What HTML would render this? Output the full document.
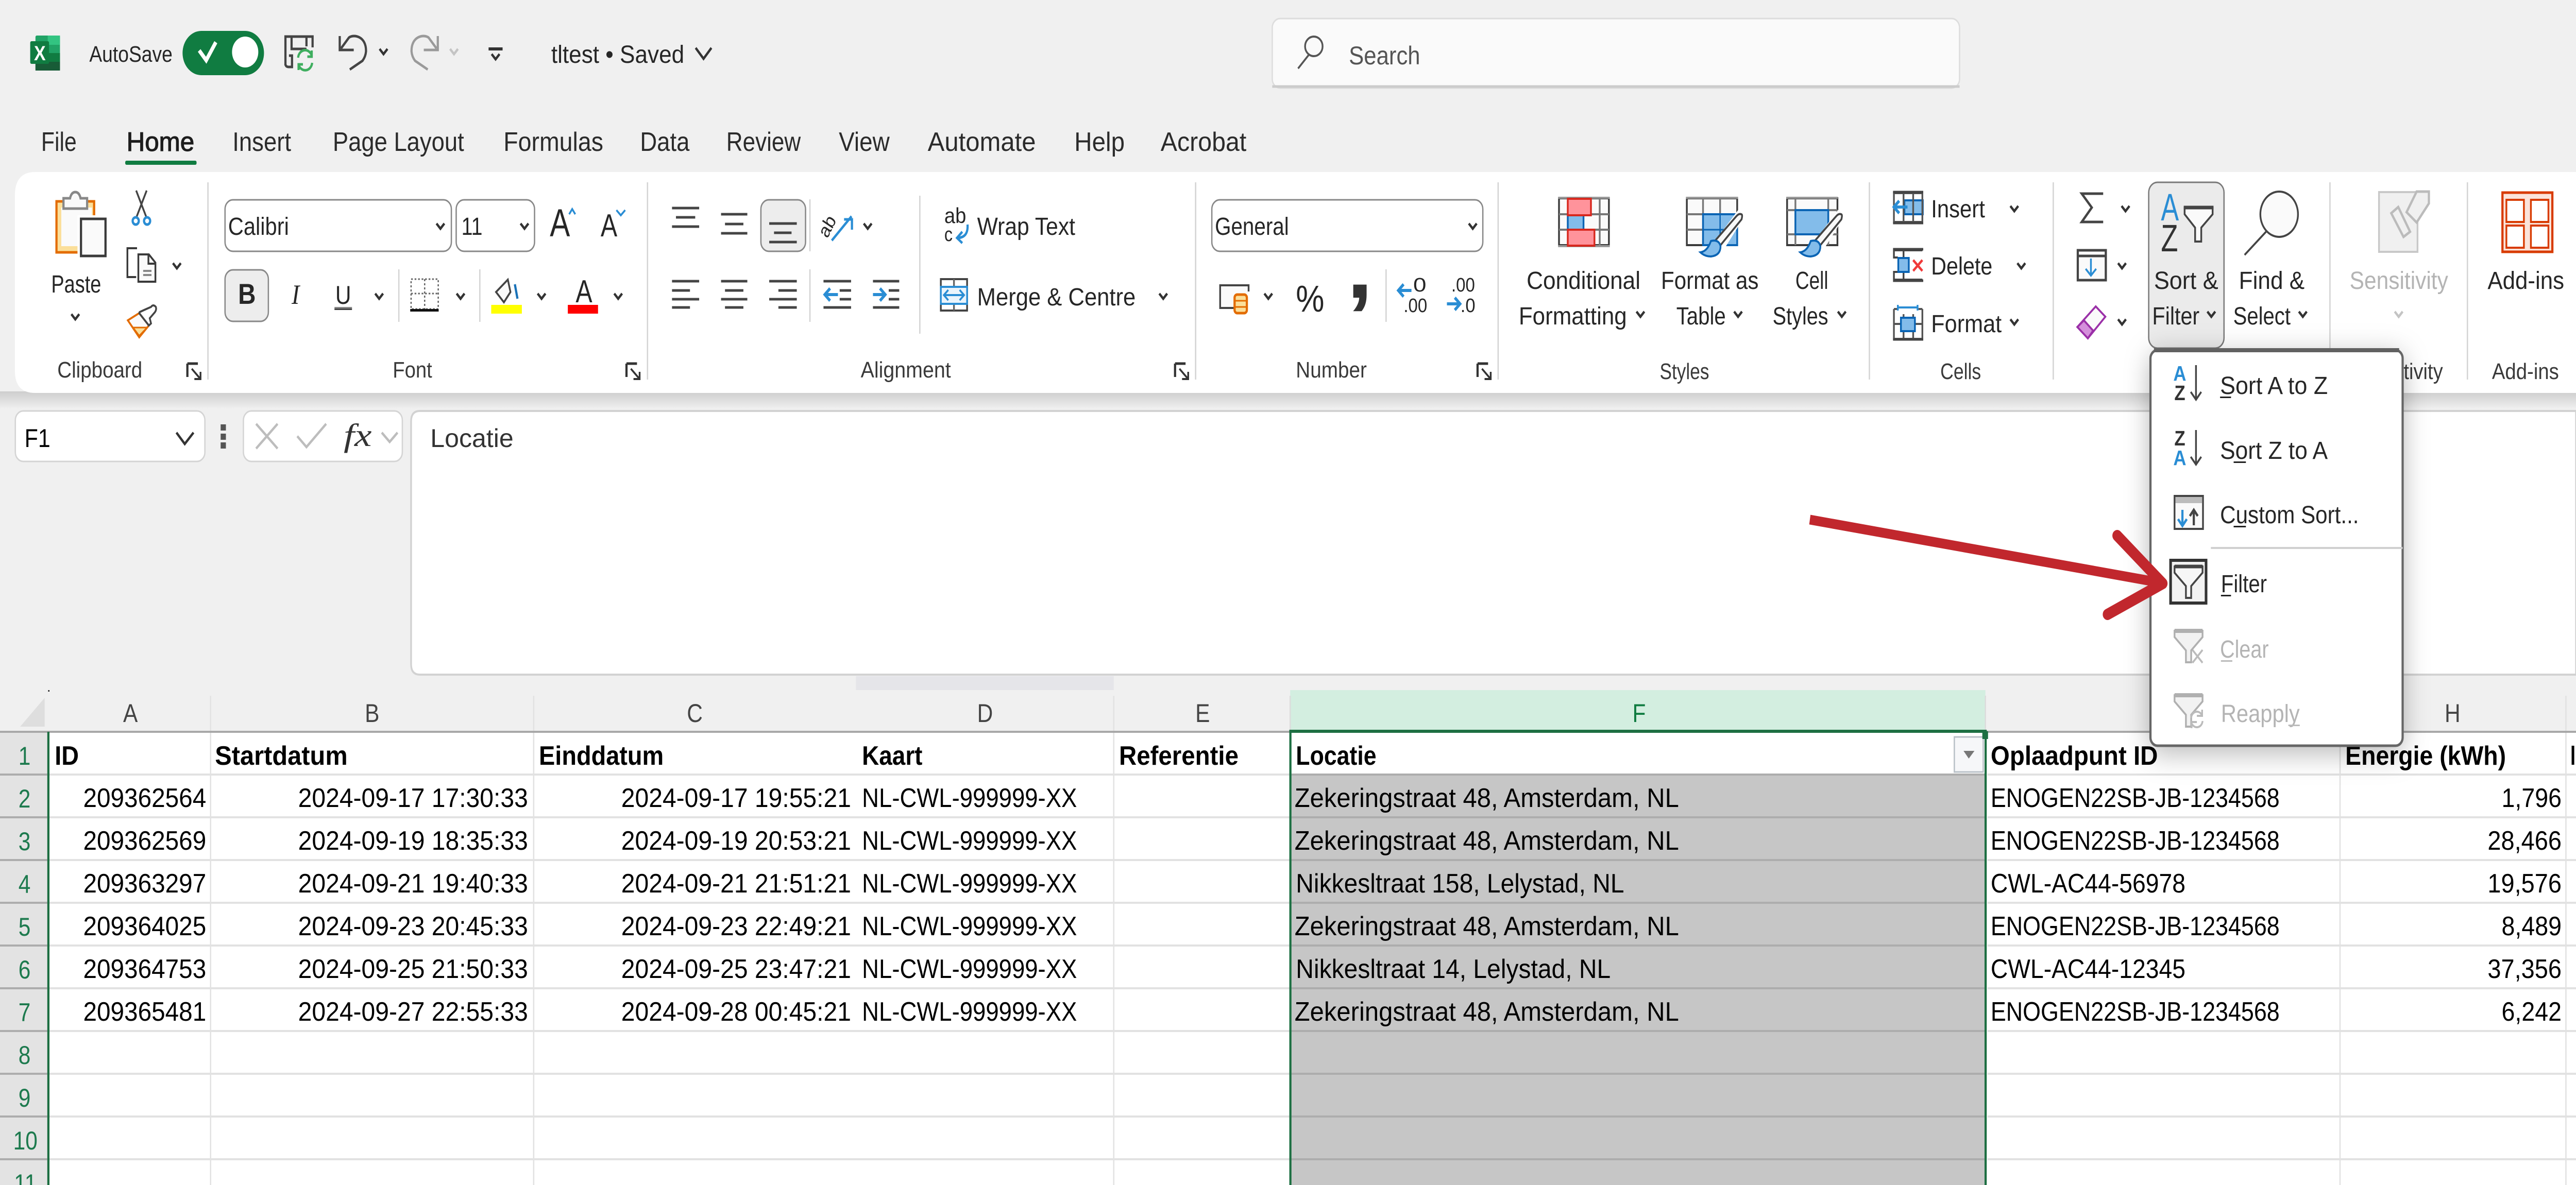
<!DOCTYPE html>
<html lang="en"><head><meta charset="utf-8"><title>tltest - Excel</title>
<style>
html,body{margin:0;padding:0;background:#f0f0f0;width:100%;height:100%;overflow:hidden}
svg{display:block;width:100vw;height:100vh}
text{font-family:"Liberation Sans",sans-serif;fill:#262626;font-size:48px}
.tab{font-size:52px;fill:#2b2b2b}
.lb{font-size:44px;fill:#3a3a3a}
.g{fill:#b4b4b4}
.cell{font-size:52px;fill:#000}
.b{font-size:52px;fill:#000;font-weight:bold}
.hd{font-size:50px;fill:#444;text-anchor:middle}
.rn{font-size:50px;fill:#1d7a4e;text-anchor:middle}
.ln{fill:none;stroke:#444;stroke-width:5}
.lg{fill:none;stroke:#9a9a9a;stroke-width:5}
.bl{fill:none;stroke:#2a8dd4;stroke-width:5}
</style></head><body>
<svg xmlns="http://www.w3.org/2000/svg" viewBox="0 0 5884 2301" preserveAspectRatio="none">
<defs>
<path id="c" d="M-9-5 0 5 9-5" fill="none" stroke="#333" stroke-width="5"/>
<path id="cg" d="M-9-5 0 5 9-5" fill="none" stroke="#c4c4c4" stroke-width="5"/>
<g id="launch"><path d="M2 2H26M2 2V28" fill="none" stroke="#333" stroke-width="5"/><path d="M12 12 32 32M32 18V32H18" fill="none" stroke="#333" stroke-width="4"/></g>
<linearGradient id="sh" x1="0" y1="0" x2="0" y2="1"><stop offset="0" stop-color="#cdcdcd"/><stop offset="1" stop-color="#f0f0f0"/></linearGradient>
<g id="brush"><path d="M3979 410 3985 420 3938 484 3912 474 3970 408Z" fill="#fff"/><path d="M3977 416Q3981 416 3978 426L3930 476 3917 468 3966 420Q3972 414 3977 416Z" fill="#f8f8f8" stroke="#444" stroke-width="4"/><path d="M3908 468Q3926 464 3930 478Q3930 496 3908 498Q3894 498 3884 490Q3900 488 3908 468Z" fill="#83bcea" stroke="#0a64b4" stroke-width="4"/></g>
<g id="fun"><path d="M4967 1100H5031V1112L5005 1138V1161H4993V1138L4967 1112Z" fill="#f6f6f6" stroke="#444" stroke-width="4"/><path d="M4967 1100H5031" stroke="#444" stroke-width="7"/></g>
<g id="fung"><path d="M4967 1225H5031V1237L5005 1263V1286H4993V1263L4967 1237Z" fill="#f2f2f2" stroke="#b0b0b0" stroke-width="4"/><path d="M4967 1225H5031" stroke="#b0b0b0" stroke-width="8"/></g>
</defs>
<rect width="5884" height="2301" fill="#f0f0f0"/>

<!-- title bar -->
<rect x="81" y="69" width="56" height="68" rx="3" fill="#21a366"/>
<rect x="109" y="69" width="28" height="18" fill="#33c481"/>
<rect x="109" y="103" width="28" height="17" fill="#107c41"/>
<rect x="81" y="87" width="28" height="33" fill="#107c41"/>
<rect x="81" y="120" width="56" height="17" fill="#185c37"/>
<rect x="69" y="80" width="43" height="44" rx="3" fill="#107c41"/>
<text x="91" y="117" text-anchor="middle" style="font-size:40px;font-weight:bold;fill:#fff">X</text>
<text x="204" y="120" textLength="190" lengthAdjust="spacingAndGlyphs" style="font-size:44px">AutoSave</text>
<rect x="417" y="60" width="186" height="86" rx="43" fill="#107c41"/>
<ellipse cx="560" cy="101" rx="30" ry="30" fill="#fff"/>
<path d="M455 98 471 117 493 82" fill="none" stroke="#fff" stroke-width="8"/>
<path d="M652 127V71H714V92M666 71V95H700M700 71V90M652 124Q652 130 660 130H667V108H660" class="ln"/>
<path d="M681 112A16 16 0 0 1 712 108M713 122A16 16 0 0 1 683 128M712 98V110H702M682 136V125H692" fill="none" stroke="#3fae5f" stroke-width="5"/>
<path d="M776 70V97H808M779 94 797 73C808 66 837 70 836 100Q835 110 828 118L799 135" class="ln"/>
<use href="#c" x="876" y="100"/>
<path d="M1000 70V97H968M997 94 979 73C968 66 939 70 940 100Q941 110 948 118L977 135" class="lg"/>
<use href="#cg" x="1037" y="100"/>
<rect x="1116" y="92" width="32" height="6" fill="#333"/><use href="#c" x="1132" y="110"/>
<text x="1259" y="122" textLength="304" lengthAdjust="spacingAndGlyphs" style="font-size:48px">tltest  •  Saved</text>
<path d="M1589 93 1607 114 1625 93" fill="none" stroke="#333" stroke-width="5"/>
<rect x="2906" y="36" width="1570" height="135" rx="18" fill="#fafafa" stroke="#ddd" stroke-width="3"/>
<path d="M2906 168H4476" stroke="#ccc" stroke-width="5"/>
<ellipse cx="3001" cy="90" rx="20" ry="19" fill="none" stroke="#555" stroke-width="4"/><path d="M2990 106 2965 133" stroke="#555" stroke-width="4"/>
<text x="3081" y="125" textLength="163" lengthAdjust="spacingAndGlyphs" style="font-size:50px;fill:#555">Search</text>

<!-- tabs -->
<text class="tab" x="94" y="293" textLength="81" lengthAdjust="spacingAndGlyphs">File</text>
<text class="tab" x="289" y="293" textLength="155" lengthAdjust="spacingAndGlyphs" style="fill:#1d1d1d;stroke:#1d1d1d;stroke-width:1.2">Home</text>
<rect x="286" y="312" width="163" height="8" rx="3" fill="#107c41"/>
<text class="tab" x="531" y="293" textLength="134" lengthAdjust="spacingAndGlyphs">Insert</text>
<text class="tab" x="760" y="293" textLength="300" lengthAdjust="spacingAndGlyphs">Page Layout</text>
<text class="tab" x="1150" y="293" textLength="228" lengthAdjust="spacingAndGlyphs">Formulas</text>
<text class="tab" x="1462" y="293" textLength="113" lengthAdjust="spacingAndGlyphs">Data</text>
<text class="tab" x="1659" y="293" textLength="170" lengthAdjust="spacingAndGlyphs">Review</text>
<text class="tab" x="1916" y="293" textLength="116" lengthAdjust="spacingAndGlyphs">View</text>
<text class="tab" x="2119" y="293" textLength="247" lengthAdjust="spacingAndGlyphs">Automate</text>
<text class="tab" x="2454" y="293" textLength="115" lengthAdjust="spacingAndGlyphs">Help</text>
<text class="tab" x="2651" y="293" textLength="196" lengthAdjust="spacingAndGlyphs">Acrobat</text>

<!-- ribbon -->
<rect x="0" y="760" width="5884" height="34" fill="url(#sh)"/>
<path d="M5884 334H80Q34 334 34 380V720Q34 763 80 763H5884Z" fill="#fff"/>
<g stroke="#d4d4d4" stroke-width="3">
<path d="M475 354V737M1479 354V737M2731 354V737M3422 354V737M4270 354V737M4690 354V737M5322 354V737M5636 354V737M2101 380V648M1850 387V488M1850 523V625M911 523V625M1096 523V625M3166 523V625"/>
</g>
<!-- clipboard -->
<rect x="129" y="391" width="86" height="99" fill="#fbdf9a" stroke="#e36c00" stroke-width="5"/>
<rect x="140" y="403" width="70" height="75" fill="#fafafa"/>
<path d="M145 405V385H160Q163 373 172 373Q181 373 184 385H199V405Z" fill="#fafafa" stroke="#888" stroke-width="5"/>
<rect x="177" y="418" width="72" height="86" fill="#fff"/>
<rect x="185" y="425" width="56" height="72" fill="#fafafa" stroke="#3a3a3a" stroke-width="5"/>
<text x="117" y="568" textLength="114" lengthAdjust="spacingAndGlyphs">Paste</text>
<use href="#c" x="172" y="615"/>
<path d="M311 370 334 421M335 370 312 421" stroke="#444" stroke-width="4" fill="none"/>
<circle cx="310" cy="429" r="7" class="bl"/><circle cx="336" cy="429" r="7" class="bl"/>
<path d="M313 482H291V538H311" fill="none" stroke="#3a3a3a" stroke-width="4"/>
<path d="M316 494H340L355 510V547H316Z" fill="#fafafa" stroke="#3a3a3a" stroke-width="4"/>
<path d="M339 494V512H355" fill="none" stroke="#3a3a3a" stroke-width="4"/>
<path d="M327 526H346M327 534H346" stroke="#888" stroke-width="4"/>
<use href="#c" x="404" y="516"/>
<path d="M292 622 318 608 340 632 318 655Z" fill="#fafafa" stroke="#e36c00" stroke-width="4"/>
<path d="M304 636 336 636 318 652Z" fill="#fbdf9a" stroke="#e36c00" stroke-width="3"/>
<path d="M319 606 329 602 345 596Q350 590 356 596Q358 601 354 606L342 618 345 628 340 632 318 608Z" fill="#fff" stroke="#444" stroke-width="4"/>
<text class="lb" x="131" y="733" textLength="194" lengthAdjust="spacingAndGlyphs">Clipboard</text>
<use href="#launch" x="426" y="704"/>

<!-- font -->
<rect x="514" y="388" width="517" height="100" rx="18" fill="#fff" stroke="#888" stroke-width="3"/>
<text x="521" y="456" textLength="139" lengthAdjust="spacingAndGlyphs">Calibri</text><use href="#c" x="1006" y="439"/>
<rect x="1042" y="388" width="179" height="100" rx="18" fill="#fff" stroke="#888" stroke-width="3"/>
<text x="1054" y="456" textLength="48" lengthAdjust="spacingAndGlyphs">11</text><use href="#c" x="1198" y="439"/>
<text x="1256" y="459" textLength="46" lengthAdjust="spacingAndGlyphs" style="font-size:76px">A</text>
<path d="M1300 416 1307 406 1314 416" class="bl" style="stroke-width:4"/>
<text x="1372" y="459" textLength="38" lengthAdjust="spacingAndGlyphs" style="font-size:62px">A</text>
<path d="M1408 408 1418 418 1428 408" class="bl" style="stroke-width:4"/>
<rect x="514" y="524" width="99" height="100" rx="18" fill="#ededed" stroke="#888" stroke-width="3"/>
<text x="564" y="590" text-anchor="middle" style="font-size:56px;font-weight:bold">B</text>
<text x="675" y="590" text-anchor="middle" style="font-size:54px;font-style:italic;font-family:'Liberation Serif',serif">I</text>
<text x="784" y="590" text-anchor="middle" style="font-size:50px">U</text>
<rect x="764" y="596" width="40" height="4" fill="#888"/><rect x="764" y="599" width="40" height="3" fill="#444"/>
<use href="#c" x="866" y="575"/>
<path d="M939 542H1001V600H939ZM970 542V600M939 570H1001" fill="none" stroke="#666" stroke-width="3" stroke-dasharray="4 4"/>
<rect x="937" y="600" width="65" height="5" fill="#111"/>
<use href="#c" x="1052" y="575"/>
<path d="M1133 567 1160 543 1166 567 1151 587Z" fill="#fafafa" stroke="#444" stroke-width="4"/>
<path d="M1176 552 1182 580" stroke="#1a72b8" stroke-width="5"/>
<rect x="1122" y="592" width="70" height="17" fill="#ff0"/>
<use href="#c" x="1237" y="575"/>
<text x="1315" y="587" textLength="38" lengthAdjust="spacingAndGlyphs" style="font-size:62px">A</text>
<rect x="1297" y="592" width="69" height="17" fill="#f00"/>
<use href="#c" x="1412" y="575"/>
<text class="lb" x="897" y="733" textLength="90" lengthAdjust="spacingAndGlyphs">Font</text>
<use href="#launch" x="1429" y="704"/>

<!-- alignment -->
<rect x="1738" y="388" width="102" height="100" rx="18" fill="#ededed" stroke="#888" stroke-width="3"/>
<path d="M1535 404H1597M1544 422H1588M1535 440H1597M1647 416H1707M1656 435H1698M1647 453H1707M1757 434H1820M1768 452H1808M1757 470H1820" class="ln"/>
<path d="M1535 546H1597M1535 564H1576M1535 581H1597M1535 597H1576M1647 546H1707M1656 564H1698M1647 581H1707M1656 597H1698M1757 546H1820M1778 564H1820M1757 581H1820M1778 597H1820" class="ln"/>
<path d="M1881 546H1944M1918 564H1944M1918 581H1944M1881 597H1944M1994 546H2054M2030 564H2054M2030 581H2054M1994 597H2054" class="ln"/>
<path d="M1914 572H1884M1896 560 1884 572 1896 584M1994 572H2022M2010 560 2022 572 2010 584" class="bl" style="stroke-width:6"/>
<text transform="translate(1890 464) rotate(-60)" style="font-size:38px">ab</text>
<path d="M1900 467 1945 420M1928 426H1946V446" class="bl"/>
<use href="#c" x="1982" y="439"/>
<text x="2157" y="433" textLength="50" lengthAdjust="spacingAndGlyphs" style="font-size:42px">ab</text>
<text x="2157" y="468" style="font-size:38px">c</text>
<path d="M2210 436Q2212 462 2186 462M2198 450 2186 462 2198 472" class="bl"/>
<text x="2232" y="456" textLength="224" lengthAdjust="spacingAndGlyphs">Wrap Text</text>
<rect x="2149" y="542" width="60" height="61" fill="#fff" stroke="#444" stroke-width="4"/>
<path d="M2149 557H2209M2149 590H2209M2179 542V557M2179 590V603" stroke="#666" stroke-width="4"/>
<rect x="2149" y="557" width="60" height="33" fill="#eaf4fc" stroke="#2a8dd4" stroke-width="4"/>
<path d="M2156 573H2202M2166 563 2156 573 2166 583M2192 563 2202 573 2192 583" class="bl" style="stroke-width:4"/>
<text x="2232" y="593" textLength="362" lengthAdjust="spacingAndGlyphs">Merge &amp; Centre</text>
<use href="#c" x="2657" y="575"/>
<text class="lb" x="1966" y="733" textLength="206" lengthAdjust="spacingAndGlyphs">Alignment</text>
<use href="#launch" x="2682" y="704"/>

<!-- number -->
<rect x="2768" y="388" width="619" height="100" rx="18" fill="#fff" stroke="#888" stroke-width="3"/>
<text x="2775" y="456" textLength="169" lengthAdjust="spacingAndGlyphs">General</text><use href="#c" x="3364" y="439"/>
<path d="M2835 598H2787V554H2852V566" fill="#fafafa" stroke="#444" stroke-width="4"/>
<rect x="2820" y="572" width="28" height="36" rx="6" fill="#fbdf9a" stroke="#e36c00" stroke-width="5"/>
<path d="M2820 584H2848M2820 596H2848" stroke="#e36c00" stroke-width="3"/>
<use href="#c" x="2897" y="575"/>
<text x="2960" y="605" textLength="65" lengthAdjust="spacingAndGlyphs" style="font-size:72px">%</text>
<text x="3076" y="578" textLength="60" lengthAdjust="spacingAndGlyphs" style="font-size:170px;font-weight:bold;fill:#333">,</text>
<text x="3228" y="566" style="font-size:38px" textLength="30" lengthAdjust="spacingAndGlyphs">0</text>
<text x="3206" y="606" style="font-size:38px" textLength="54" lengthAdjust="spacingAndGlyphs">.00</text>
<path d="M3224 564H3194M3206 552 3194 564 3206 576" class="bl" style="stroke-width:6"/>
<text x="3315" y="566" style="font-size:38px" textLength="54" lengthAdjust="spacingAndGlyphs">.00</text>
<text x="3336" y="606" style="font-size:38px" textLength="34" lengthAdjust="spacingAndGlyphs">.0</text>
<path d="M3305 590H3335M3323 578 3335 590 3323 602" class="bl" style="stroke-width:6"/>
<text class="lb" x="2960" y="733" textLength="162" lengthAdjust="spacingAndGlyphs">Number</text>
<use href="#launch" x="3373" y="704"/>

<!-- styles -->
<rect x="3561" y="385" width="114" height="91" fill="#fafafa" stroke="#3a3a3a" stroke-width="4"/>
<path d="M3559 384H3677M3559 478H3677" stroke="#999" stroke-width="4"/>
<path d="M3561 416H3675M3561 446H3675M3654 385V476" stroke="#777" stroke-width="4"/>
<rect x="3581" y="418" width="36" height="28" fill="#83bcea" stroke="#0a64b4" stroke-width="4"/>
<rect x="3581" y="386" width="53" height="32" fill="#ff939b" stroke="#d8281e" stroke-width="4"/>
<rect x="3581" y="446" width="61" height="31" fill="#ff939b" stroke="#d8281e" stroke-width="4"/>
<text x="3487" y="561" textLength="260" lengthAdjust="spacingAndGlyphs">Conditional</text>
<text x="3469" y="630" textLength="247" lengthAdjust="spacingAndGlyphs">Formatting</text>
<use href="#c" x="3747" y="610"/>

<rect x="3853" y="385" width="115" height="91" fill="#fafafa" stroke="#3a3a3a" stroke-width="4"/>
<path d="M3851 384H3970" stroke="#999" stroke-width="4"/>
<path d="M3853 416H3968M3853 446H3968M3890 385V476M3929 385V476" stroke="#777" stroke-width="4"/>
<rect x="3890" y="416" width="78" height="60" fill="#83bcea" stroke="#0a64b4" stroke-width="4"/>
<path d="M3890 446H3968M3929 416V476" stroke="#0a64b4" stroke-width="3"/>
<use href="#brush"/>
<text x="3794" y="561" textLength="223" lengthAdjust="spacingAndGlyphs">Format as</text>
<text x="3829" y="630" textLength="113" lengthAdjust="spacingAndGlyphs">Table</text>
<use href="#c" x="3970" y="610"/>

<rect x="4082" y="385" width="115" height="91" fill="#fafafa" stroke="#3a3a3a" stroke-width="4"/>
<path d="M4080 384H4198" stroke="#999" stroke-width="4"/>
<path d="M4082 408H4197M4082 455H4197M4101 385V476M4176 385V476" stroke="#777" stroke-width="4"/>
<rect x="4101" y="408" width="75" height="47" fill="#83bcea" stroke="#0a64b4" stroke-width="4"/>
<use href="#brush" x="228"/>
<text x="4101" y="561" textLength="75" lengthAdjust="spacingAndGlyphs">Cell</text>
<text x="4049" y="630" textLength="127" lengthAdjust="spacingAndGlyphs">Styles</text>
<use href="#c" x="4207" y="610"/>
<text class="lb" x="3791" y="736" textLength="113" lengthAdjust="spacingAndGlyphs">Styles</text>

<!-- cells -->
<rect x="4350" y="389" width="42" height="27" fill="#83bcea" stroke="#0a64b4" stroke-width="4"/>
<path d="M4326 375H4391V431H4326ZM4348 375V431M4370 375V431" fill="none" stroke="#555" stroke-width="4"/>
<path d="M4324 373H4393M4324 433H4393" stroke="#444" stroke-width="5"/>
<path d="M4357 402H4326M4338 390 4326 402 4338 414" class="bl" style="stroke-width:6"/>
<text x="4411" y="422" textLength="123" lengthAdjust="spacingAndGlyphs">Insert</text><use href="#c" x="4601" y="405"/>
<path d="M4326 486H4391M4326 543H4391M4326 486V500H4335M4326 543V528H4335M4348 486V500M4348 528V543" fill="none" stroke="#444" stroke-width="4"/>
<path d="M4324 484H4393M4324 545H4393" stroke="#444" stroke-width="5"/>
<rect x="4336" y="501" width="24" height="27" fill="#83bcea" stroke="#0a64b4" stroke-width="4"/>
<path d="M4370 505 4391 526M4391 505 4370 526" stroke="#f03a3a" stroke-width="5"/>
<text x="4411" y="533" textLength="140" lengthAdjust="spacingAndGlyphs">Delete</text><use href="#c" x="4617" y="516"/>
<path d="M4326 600V658H4391V600M4326 600H4335M4382 600H4391M4326 629H4391M4348 610V658M4370 610V658" fill="none" stroke="#555" stroke-width="4"/>
<path d="M4324 659H4393" stroke="#444" stroke-width="5"/>
<path d="M4335 597H4380M4335 592V603M4380 592V603" stroke="#2a8dd4" stroke-width="4"/>
<rect x="4342" y="617" width="32" height="26" fill="#83bcea" stroke="#0a64b4" stroke-width="4"/>
<text x="4411" y="645" textLength="161" lengthAdjust="spacingAndGlyphs">Format</text><use href="#c" x="4601" y="625"/>
<text class="lb" x="4432" y="736" textLength="93" lengthAdjust="spacingAndGlyphs">Cells</text>

<!-- editing -->
<path d="M4804 376H4755L4778 403 4755 431H4804" class="ln"/><use href="#c" x="4855" y="405"/>
<rect x="4746" y="486" width="64" height="58" fill="#fafafa" stroke="#444" stroke-width="5"/>
<path d="M4746 497H4810" stroke="#444" stroke-width="5"/>
<path d="M4776 502V534M4764 522 4776 535 4788 522" class="bl" style="stroke-width:4"/><use href="#c" x="4847" y="516"/>
<path d="M4787 595 4809 615 4769 657 4745 635Z" fill="#fafafa" stroke="#9b30a8" stroke-width="4"/>
<path d="M4760 622 4781 642 4769 657 4745 635Z" fill="#d48fdb" stroke="#9b30a8" stroke-width="4"/>
<use href="#c" x="4847" y="625"/>
<rect x="4908" y="354" width="172" height="322" rx="20" fill="#ebebeb" stroke="#7a7a7a" stroke-width="3"/>
<text x="4936" y="428" textLength="41" lengthAdjust="spacingAndGlyphs" style="font-size:74px;fill:#2a8dd4">A</text>
<text x="4936" y="488" textLength="39" lengthAdjust="spacingAndGlyphs" style="font-size:74px;fill:#333">Z</text>
<path d="M4990 404H5054V416L5028 442V469H5014V442L4990 416Z" fill="#fafafa" stroke="#444" stroke-width="4"/>
<path d="M4988 403H5056" stroke="#444" stroke-width="7"/>
<text x="4920" y="561" textLength="147" lengthAdjust="spacingAndGlyphs">Sort &amp;</text>
<text x="4916" y="630" textLength="108" lengthAdjust="spacingAndGlyphs">Filter</text>
<use href="#c" x="5051" y="610"/>
<ellipse cx="5206" cy="416" rx="43" ry="44" fill="#fafafa" stroke="#444" stroke-width="4"/>
<path d="M5176 450 5127 495" stroke="#444" stroke-width="4"/>
<text x="5114" y="561" textLength="150" lengthAdjust="spacingAndGlyphs">Find &amp;</text>
<text x="5101" y="630" textLength="131" lengthAdjust="spacingAndGlyphs">Select</text>
<use href="#c" x="5260" y="610"/>

<!-- sensitivity / add-ins -->
<rect x="5434" y="373" width="88" height="116" fill="#f0f0f0" stroke="#c8c8c8" stroke-width="4"/>
<path d="M5478 402 5505 450 5490 460 5462 414Z" fill="#f0f0f0" stroke="#bbb" stroke-width="5"/>
<path d="M5520 372 5548 372 5548 395 5520 432 5497 412Z" fill="#f0f0f0" stroke="#bbb" stroke-width="5"/>
<text class="g" x="5367" y="561" textLength="225" lengthAdjust="spacingAndGlyphs">Sensitivity</text>
<use href="#cg" x="5479" y="610"/>
<text class="lb" x="5378" y="736" textLength="202" lengthAdjust="spacingAndGlyphs">Sensitivity</text>
<rect x="5716" y="374" width="114" height="115" fill="#fbe3da" stroke="#d83b01" stroke-width="5"/>
<rect x="5725" y="388" width="40" height="43" fill="#fff" stroke="#d83b01" stroke-width="4"/>
<rect x="5781" y="388" width="40" height="43" fill="#fff" stroke="#d83b01" stroke-width="4"/>
<rect x="5725" y="438" width="40" height="43" fill="#fff" stroke="#d83b01" stroke-width="4"/>
<rect x="5781" y="438" width="40" height="43" fill="#fff" stroke="#d83b01" stroke-width="4"/>
<text x="5682" y="561" textLength="175" lengthAdjust="spacingAndGlyphs">Add-ins</text>
<text class="lb" x="5692" y="736" textLength="153" lengthAdjust="spacingAndGlyphs">Add-ins</text>

<!-- formula bar -->
<rect x="35" y="798" width="433" height="98" rx="18" fill="#fff" stroke="#d4d4d4" stroke-width="3"/>
<text x="56" y="868" textLength="59" lengthAdjust="spacingAndGlyphs" style="font-size:50px;fill:#000">F1</text>
<path d="M403 840 422 862 442 840" fill="none" stroke="#333" stroke-width="5"/>
<rect x="504" y="824" width="12" height="12" fill="#555"/><rect x="504" y="842" width="12" height="12" fill="#555"/><rect x="504" y="859" width="12" height="12" fill="#555"/>
<rect x="556" y="798" width="363" height="98" rx="18" fill="#fff" stroke="#d4d4d4" stroke-width="3"/>
<path d="M585 823 634 871M634 823 585 871M679 847 700 868 745 823M872 840 890 858 908 840" fill="none" stroke="#bdbdbd" stroke-width="5"/>
<text x="785" y="866" textLength="64" lengthAdjust="spacingAndGlyphs" style="font-family:'Liberation Serif',serif;font-style:italic;font-size:62px;fill:#333">fx</text>
<path d="M5884 798H959Q939 798 939 818V1290Q939 1310 959 1310H5884Z" fill="#fff" stroke="#d2d2d2" stroke-width="4"/>
<text x="983" y="868" textLength="190" lengthAdjust="spacingAndGlyphs" style="font-size:50px;fill:#333">Locatie</text>

<!-- grid -->
<rect x="1955" y="1313" width="589" height="27" fill="#e5e5e9"/>
<rect x="0" y="1421" width="108" height="880" fill="#e3e3e3"/>
<rect x="110" y="1421" width="5774" height="880" fill="#fff"/>
<rect x="2947" y="1340" width="1588" height="80" fill="#d3eee0"/>
<rect x="2950" y="1504" width="1586" height="797" fill="#c6c6c6"/>
<path d="M46 1411 102 1355V1411Z" fill="#dedede"/>
<rect x="110" y="1340" width="3" height="3" fill="#222"/>
<g stroke="#e2e2e2" stroke-width="3">
<path d="M481 1351V2301M1219 1351V2301M2544 1351V2301M5345 1351V2301M5861 1351V2301"/>
<path d="M2947 1351V1420M4535 1351V1420" stroke="#dcdcdc"/>
</g>
<g stroke="#e2e2e2" stroke-width="4">
<path d="M110 1504H2947M110 1587H2947M110 1670H2947M110 1753H2947M110 1836H2947M110 1919H2947M110 2002H2947M110 2085H2947M110 2168H2947M110 2251H2947"/>
<path d="M4540 1504H5884M4540 1587H5884M4540 1670H5884M4540 1753H5884M4540 1836H5884M4540 1919H5884M4540 2002H5884M4540 2085H5884M4540 2168H5884M4540 2251H5884"/>
</g>
<g stroke="#adadad" stroke-width="4">
<path d="M2950 1504H4535M2950 1587H4535M2950 1670H4535M2950 1753H4535M2950 1836H4535M2950 1919H4535M2950 2002H4535M2950 2085H4535M2950 2168H4535M2950 2251H4535"/>
<path d="M0 1504H108M0 1587H108M0 1670H108M0 1753H108M0 1836H108M0 1919H108M0 2002H108M0 2085H108M0 2168H108M0 2251H108"/>
<path d="M0 1421H2947M4535 1421H5884" stroke="#a8a8a8"/>
</g>
<rect x="108" y="1421" width="5" height="880" fill="#1d6f42"/>
<rect x="2945" y="1418" width="5" height="883" fill="#1d6f42"/>
<rect x="4533" y="1418" width="5" height="883" fill="#1d6f42"/>
<rect x="2945" y="1417" width="1593" height="6" fill="#1d6f42"/>
<rect x="4464" y="1431" width="66" height="68" fill="#f6f7f9" stroke="#b9c0c7" stroke-width="3"/>
<path d="M4485 1458H4510L4497 1473Z" fill="#777"/>
<rect x="4528" y="1420" width="13" height="15" fill="#1d6f42"/>

<text class="hd" x="298" y="1402">A</text><text class="hd" x="850" y="1402">B</text><text class="hd" x="1587" y="1402">C</text><text class="hd" x="2250" y="1402">D</text><text class="hd" x="2747" y="1402">E</text><text class="hd" x="3744" y="1402" style="fill:#107c41">F</text><text class="hd" x="5602" y="1402">H</text>
<text class="rn" x="56" y="1485">1</text><text class="rn" x="56" y="1568">2</text><text class="rn" x="56" y="1651">3</text><text class="rn" x="56" y="1734">4</text><text class="rn" x="56" y="1817">5</text><text class="rn" x="56" y="1900">6</text><text class="rn" x="56" y="1983">7</text><text class="rn" x="56" y="2066">8</text><text class="rn" x="56" y="2149">9</text><text class="rn" x="58" y="2232">10</text><text class="rn" x="58" y="2315">11</text>

<text class="b" x="125" y="1485" textLength="55" lengthAdjust="spacingAndGlyphs">ID</text>
<text class="b" x="491" y="1485" textLength="303" lengthAdjust="spacingAndGlyphs">Startdatum</text>
<text class="b" x="1231" y="1485" textLength="285" lengthAdjust="spacingAndGlyphs">Einddatum</text>
<text class="b" x="1969" y="1485" textLength="138" lengthAdjust="spacingAndGlyphs">Kaart</text>
<text class="b" x="2556" y="1485" textLength="273" lengthAdjust="spacingAndGlyphs">Referentie</text>
<text class="b" x="2960" y="1485" textLength="184" lengthAdjust="spacingAndGlyphs">Locatie</text>
<text class="b" x="4547" y="1485" textLength="382" lengthAdjust="spacingAndGlyphs">Oplaadpunt ID</text>
<text class="b" x="5357" y="1485" textLength="367" lengthAdjust="spacingAndGlyphs">Energie (kWh)</text>
<rect x="5874" y="1448" width="6" height="37" fill="#000"/>

<text class="cell" x="190" y="1567" textLength="281" lengthAdjust="spacingAndGlyphs">209362564</text>
<text class="cell" x="190" y="1650" textLength="281" lengthAdjust="spacingAndGlyphs">209362569</text>
<text class="cell" x="190" y="1733" textLength="281" lengthAdjust="spacingAndGlyphs">209363297</text>
<text class="cell" x="190" y="1816" textLength="281" lengthAdjust="spacingAndGlyphs">209364025</text>
<text class="cell" x="190" y="1899" textLength="281" lengthAdjust="spacingAndGlyphs">209364753</text>
<text class="cell" x="190" y="1982" textLength="281" lengthAdjust="spacingAndGlyphs">209365481</text>

<text class="cell" x="681" y="1567" textLength="525" lengthAdjust="spacingAndGlyphs">2024-09-17 17:30:33</text>
<text class="cell" x="681" y="1650" textLength="525" lengthAdjust="spacingAndGlyphs">2024-09-19 18:35:33</text>
<text class="cell" x="681" y="1733" textLength="525" lengthAdjust="spacingAndGlyphs">2024-09-21 19:40:33</text>
<text class="cell" x="681" y="1816" textLength="525" lengthAdjust="spacingAndGlyphs">2024-09-23 20:45:33</text>
<text class="cell" x="681" y="1899" textLength="525" lengthAdjust="spacingAndGlyphs">2024-09-25 21:50:33</text>
<text class="cell" x="681" y="1982" textLength="525" lengthAdjust="spacingAndGlyphs">2024-09-27 22:55:33</text>

<text class="cell" x="1419" y="1567" textLength="525" lengthAdjust="spacingAndGlyphs">2024-09-17 19:55:21</text>
<text class="cell" x="1419" y="1650" textLength="525" lengthAdjust="spacingAndGlyphs">2024-09-19 20:53:21</text>
<text class="cell" x="1419" y="1733" textLength="525" lengthAdjust="spacingAndGlyphs">2024-09-21 21:51:21</text>
<text class="cell" x="1419" y="1816" textLength="525" lengthAdjust="spacingAndGlyphs">2024-09-23 22:49:21</text>
<text class="cell" x="1419" y="1899" textLength="525" lengthAdjust="spacingAndGlyphs">2024-09-25 23:47:21</text>
<text class="cell" x="1419" y="1982" textLength="525" lengthAdjust="spacingAndGlyphs">2024-09-28 00:45:21</text>

<text class="cell" x="1969" y="1567" textLength="491" lengthAdjust="spacingAndGlyphs">NL-CWL-999999-XX</text>
<text class="cell" x="1969" y="1650" textLength="491" lengthAdjust="spacingAndGlyphs">NL-CWL-999999-XX</text>
<text class="cell" x="1969" y="1733" textLength="491" lengthAdjust="spacingAndGlyphs">NL-CWL-999999-XX</text>
<text class="cell" x="1969" y="1816" textLength="491" lengthAdjust="spacingAndGlyphs">NL-CWL-999999-XX</text>
<text class="cell" x="1969" y="1899" textLength="491" lengthAdjust="spacingAndGlyphs">NL-CWL-999999-XX</text>
<text class="cell" x="1969" y="1982" textLength="491" lengthAdjust="spacingAndGlyphs">NL-CWL-999999-XX</text>

<text class="cell" x="2957" y="1567" textLength="878" lengthAdjust="spacingAndGlyphs">Zekeringstraat 48, Amsterdam, NL</text>
<text class="cell" x="2957" y="1650" textLength="878" lengthAdjust="spacingAndGlyphs">Zekeringstraat 48, Amsterdam, NL</text>
<text class="cell" x="2960" y="1733" textLength="750" lengthAdjust="spacingAndGlyphs">Nikkesltraat 158, Lelystad, NL</text>
<text class="cell" x="2957" y="1816" textLength="878" lengthAdjust="spacingAndGlyphs">Zekeringstraat 48, Amsterdam, NL</text>
<text class="cell" x="2960" y="1899" textLength="719" lengthAdjust="spacingAndGlyphs">Nikkesltraat 14, Lelystad, NL</text>
<text class="cell" x="2957" y="1982" textLength="878" lengthAdjust="spacingAndGlyphs">Zekeringstraat 48, Amsterdam, NL</text>

<text class="cell" x="4547" y="1567" textLength="660" lengthAdjust="spacingAndGlyphs">ENOGEN22SB-JB-1234568</text>
<text class="cell" x="4547" y="1650" textLength="660" lengthAdjust="spacingAndGlyphs">ENOGEN22SB-JB-1234568</text>
<text class="cell" x="4547" y="1733" textLength="445" lengthAdjust="spacingAndGlyphs">CWL-AC44-56978</text>
<text class="cell" x="4547" y="1816" textLength="660" lengthAdjust="spacingAndGlyphs">ENOGEN22SB-JB-1234568</text>
<text class="cell" x="4547" y="1899" textLength="445" lengthAdjust="spacingAndGlyphs">CWL-AC44-12345</text>
<text class="cell" x="4547" y="1982" textLength="660" lengthAdjust="spacingAndGlyphs">ENOGEN22SB-JB-1234568</text>

<text class="cell" x="5714" y="1567" textLength="137" lengthAdjust="spacingAndGlyphs">1,796</text>
<text class="cell" x="5682" y="1650" textLength="169" lengthAdjust="spacingAndGlyphs">28,466</text>
<text class="cell" x="5682" y="1733" textLength="169" lengthAdjust="spacingAndGlyphs">19,576</text>
<text class="cell" x="5714" y="1816" textLength="137" lengthAdjust="spacingAndGlyphs">8,489</text>
<text class="cell" x="5682" y="1899" textLength="169" lengthAdjust="spacingAndGlyphs">37,356</text>
<text class="cell" x="5714" y="1982" textLength="137" lengthAdjust="spacingAndGlyphs">6,242</text>

<!-- dropdown menu -->
<rect x="4912" y="680" width="576" height="768" rx="16" fill="#fff" stroke="#666" stroke-width="5" style="filter:drop-shadow(0 12px 28px rgba(0,0,0,.28))"/>
<path d="M4920 680H5480" stroke="#616161" stroke-width="8"/>
<text x="4979" y="739" text-anchor="middle" style="font-size:41px;font-weight:bold;fill:#2a8dd4">A</text>
<text x="4979" y="777" text-anchor="middle" style="font-size:41px;font-weight:bold;fill:#333">Z</text>
<path d="M5016 709V775M5004 761 5016 776 5028 761" fill="none" stroke="#444" stroke-width="4"/>
<text x="5071" y="765" textLength="246" lengthAdjust="spacingAndGlyphs">Sort A to Z</text><rect x="5071" y="770" width="25" height="3" fill="#222"/>
<text x="4979" y="865" text-anchor="middle" style="font-size:41px;font-weight:bold;fill:#333">Z</text>
<text x="4979" y="903" text-anchor="middle" style="font-size:41px;font-weight:bold;fill:#2a8dd4">A</text>
<path d="M5016 835V901M5004 887 5016 902 5028 887" fill="none" stroke="#444" stroke-width="4"/>
<text x="5071" y="891" textLength="246" lengthAdjust="spacingAndGlyphs">Sort Z to A</text><rect x="5102" y="896" width="28" height="3" fill="#222"/>
<rect x="4967" y="963" width="65" height="64" fill="#fafafa" stroke="#444" stroke-width="4"/>
<rect x="4969" y="965" width="61" height="12" fill="#bcbcbc"/>
<path d="M4985 990V1020M4975 1008 4985 1021 4995 1008" class="bl" style="stroke-width:5"/>
<path d="M5011 1020V990M5002 1002 5011 990 5020 1002" fill="none" stroke="#444" stroke-width="5"/>
<text x="5071" y="1016" textLength="317" lengthAdjust="spacingAndGlyphs">Custom Sort...</text><rect x="5102" y="1021" width="28" height="3" fill="#222"/>
<rect x="5050" y="1062" width="438" height="4" fill="#d0d0d0"/>
<rect x="4958" y="1088" width="81" height="83" fill="#f2f2f2" stroke="#333" stroke-width="6"/>
<use href="#fun"/>
<text x="5073" y="1150" textLength="105" lengthAdjust="spacingAndGlyphs">Filter</text><rect x="5073" y="1155" width="23" height="3" fill="#222"/>
<use href="#fung"/>
<path d="M5008 1262 5031 1287M5031 1262 5008 1287" stroke="#bbb" stroke-width="4"/>
<text class="g" x="5071" y="1277" textLength="111" lengthAdjust="spacingAndGlyphs">Clear</text><rect x="5073" y="1282" width="26" height="3" fill="#bbb"/>
<use href="#fung" y="125"/>
<path d="M5005 1394A13 13 0 0 1 5029 1388M5031 1400A13 13 0 0 1 5007 1406M5030 1378V1390H5018M5006 1414V1402H5018" fill="none" stroke="#bbb" stroke-width="4"/>
<text class="g" x="5073" y="1402" textLength="180" lengthAdjust="spacingAndGlyphs">Reapply</text><rect x="5227" y="1407" width="26" height="3" fill="#bbb"/>

<!-- red arrow -->
<path d="M4134 1009 4938 1132" fill="none" stroke="#c1272d" stroke-width="19"/>
<path d="M4836 1040 4940 1133 4814 1193" fill="none" stroke="#c1272d" stroke-width="22" stroke-linecap="round" stroke-linejoin="round"/>
</svg>
</body></html>
